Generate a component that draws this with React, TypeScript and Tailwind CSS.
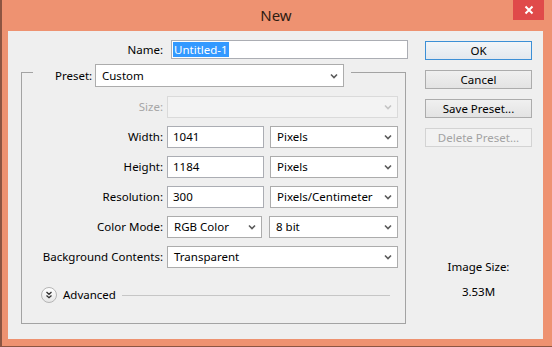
import React from "react";

const font = { fontFamily: '"Noto Sans", "Open Sans", sans-serif' };

function Chevron({ disabled = false }: { disabled?: boolean }) {
  return (
    <svg width="8" height="6" viewBox="0 0 8 6" className="shrink-0">
      <path d="M1 1.5 L4 4.5 L7 1.5" fill="none" stroke={disabled ? "#c4c4c4" : "#5a5a5a"} strokeWidth="1.6" />
    </svg>
  );
}

function Select({ w, text, disabled = false, h = "h-[22px]" }: { w: string; text: string; disabled?: boolean; h?: string }) {
  return (
    <div
      className={`${w} ${h} flex items-center justify-between pl-[6px] pr-[5px] border ${
        disabled ? "bg-[#f3f3f3] border-[#dadada]" : "bg-white border-[#acacac]"
      }`}
    >
      <span className="text-[11.5px] leading-none text-black whitespace-nowrap">{text}</span>
      <Chevron disabled={disabled} />
    </div>
  );
}

function Input({ w, text }: { w: string; text: string }) {
  return (
    <div className={`${w} h-[22px] flex items-center pl-[5px] bg-white border border-[#abadb3]`}>
      <span className="text-[11.5px] leading-none text-black">{text}</span>
    </div>
  );
}

function Row({ label, children, grey = false }: { label: string; children: React.ReactNode; grey?: boolean }) {
  return (
    <div className="flex items-center h-[22px]">
      <div className={`w-[141px] text-right text-[11.5px] leading-none whitespace-nowrap ${grey ? "text-[#a6a6a6]" : "text-black"}`}>
        {label}
      </div>
      <div className="ml-[4px] flex items-center gap-[6px]">{children}</div>
    </div>
  );
}

function Button({ text, variant = "normal" }: { text: string; variant?: "ok" | "normal" | "disabled" }) {
  const cls =
    variant === "ok"
      ? "border-[#3c8fd6] bg-gradient-to-b from-[#f2f5f8] to-[#e3e8ee] text-black"
      : variant === "disabled"
      ? "border-[#d3d3d3] bg-[#f2f2f2] text-[#a3a3a3]"
      : "border-[#acacac] bg-gradient-to-b from-[#f0f0f0] to-[#e3e3e3] text-black";
  return (
    <div className={`w-[107px] h-[19px] border flex items-center justify-center text-[11.5px] leading-none ${cls}`}>
      {text}
    </div>
  );
}

export default function App() {
  return (
    <div style={font} className="w-[552px] h-[347px] bg-[#ee9271] flex flex-col border-l-[2px] border-b border-[#8c5542] overflow-hidden">
      {/* Title bar */}
      <div className="relative h-[31px] flex items-center justify-center shrink-0">
        <span className="text-[15px] leading-none text-[#2e1c12] -mt-[1px] -ml-[2px]">New</span>
        <div className="absolute top-0 right-[8px] w-[31px] h-[20px] bg-[#e04a4a] flex items-center justify-center">
          <svg width="10" height="10" viewBox="0 0 10 10">
            <path d="M1.5 1.5 L8.5 8.5 M8.5 1.5 L1.5 8.5" stroke="white" strokeWidth="2" />
          </svg>
        </div>
      </div>

      {/* Client area */}
      <div className="ml-[6px] w-[535px] h-[308px] bg-[#efefef] flex">
        {/* Left column */}
        <div className="w-[400px] flex flex-col">
          <div className="mt-[9px] h-[19px] flex items-center">
            <div className="w-[155px] text-right text-[11.5px] leading-none text-black">Name:</div>
            <div className="ml-[8px] w-[237px] h-[19px] bg-white border border-[#abadb3] flex items-center pl-[1px]">
              <span className="bg-[#3399ff] text-white text-[11.5px] leading-[15px] px-[1px]">Untitled-1</span>
            </div>
          </div>

          {/* Group box */}
          <div className="mt-[13px] ml-[13px] w-[385px] h-[252px] border border-[#a3a3a3] flex flex-col">
            <div className="-mt-[9px] ml-[11px] w-[318px] h-[23px] bg-[#efefef] flex items-center justify-between pl-[22px] pr-[7px]">
              <span className="text-[11.5px] leading-none text-black">Preset:</span>
              <Select w="w-[249px]" h="h-[23px]" text="Custom" />
            </div>

            <div className="mt-[9px] flex flex-col gap-[8px]">
              <Row label="Size:" grey>
                <Select w="w-[231px]" text="" disabled />
              </Row>
              <Row label="Width:">
                <Input w="w-[97px]" text="1041" />
                <Select w="w-[128px]" text="Pixels" />
              </Row>
              <Row label="Height:">
                <Input w="w-[97px]" text="1184" />
                <Select w="w-[128px]" text="Pixels" />
              </Row>
              <Row label="Resolution:">
                <Input w="w-[97px]" text="300" />
                <Select w="w-[128px]" text="Pixels/Centimeter" />
              </Row>
              <Row label="Color Mode:">
                <div className="flex items-center gap-[7px]">
                  <Select w="w-[95px]" text="RGB Color" />
                  <Select w="w-[129px]" text="8 bit" />
                </div>
              </Row>
              <Row label="Background Contents:">
                <Select w="w-[231px]" text="Transparent" />
              </Row>
            </div>

            <div className="mt-[19px] ml-[19px] flex items-center h-[16px]">
              <div className="w-[16px] h-[16px] rounded-full border border-[#b5b5b5] bg-gradient-to-b from-white to-[#e6e6e6] flex items-center justify-center">
                <svg width="8" height="8" viewBox="0 0 8 8">
                  <path d="M1.5 1 L4 3.3 L6.5 1 M1.5 4.4 L4 6.7 L6.5 4.4" fill="none" stroke="#333" strokeWidth="1.3" />
                </svg>
              </div>
              <span className="ml-[6px] text-[11.5px] leading-none text-black">Advanced</span>
              <div className="ml-[6px] w-[268px] h-px bg-[#c6c6c6]" />
            </div>
          </div>
        </div>

        {/* Right column */}
        <div className="ml-[17px] w-[107px] flex flex-col">
          <div className="mt-[10px] flex flex-col gap-[10px]">
            <Button text="OK" variant="ok" />
            <Button text="Cancel" />
            <Button text="Save Preset..." />
            <Button text="Delete Preset..." variant="disabled" />
          </div>
          <div className="mt-[114px] text-center text-[11.5px] leading-none text-black">Image Size:</div>
          <div className="mt-[13px] text-center text-[11.5px] leading-none text-black">3.53M</div>
        </div>
      </div>
    </div>
  );
}
